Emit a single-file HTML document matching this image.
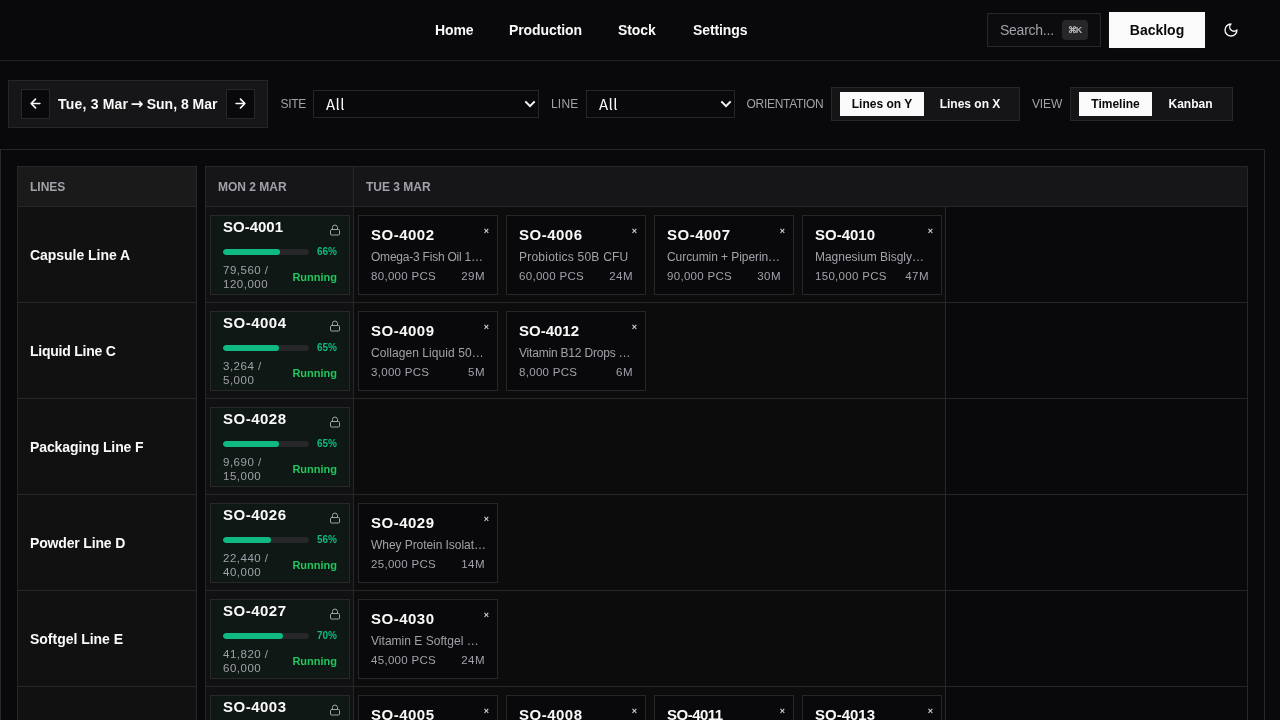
<!DOCTYPE html>
<html lang="en">
<head>
<meta charset="utf-8">
<title>Production Timeline</title>
<style>
*{box-sizing:border-box;margin:0;padding:0}
html,body{width:1280px;height:720px;overflow:hidden;background:#09090b;color:#fafafa;font-family:"Liberation Sans",sans-serif;}
body{position:relative;will-change:transform;-webkit-font-smoothing:antialiased}
.abs{position:absolute}
/* NAV */
.nav{position:absolute;left:0;top:0;width:1280px;height:61px;border-bottom:1px solid #232326}
.nav a{position:absolute;top:21px;font-size:14px;letter-spacing:-.1px;font-weight:700;color:#fafafa;text-decoration:none;line-height:18px;white-space:nowrap}
.search{position:absolute;left:987px;top:13px;width:114px;height:34px;border:1px solid #27272a;background:#0c0c0e;color:#a1a1aa;font-size:14px;line-height:32px;padding-left:12px;letter-spacing:-.25px}
.kbd{position:absolute;left:74px;top:6px;width:26px;height:20px;background:#27272a;border-radius:4px;color:#b4b4bb;font-size:9px;font-weight:700;line-height:20px;text-align:center;letter-spacing:-1.2px;text-indent:-1px}
.backlog{position:absolute;left:1109px;top:12px;width:96px;height:36px;background:#fafafa;color:#09090b;font-size:14px;font-weight:700;line-height:36px;text-align:center;box-shadow:0 0 8px rgba(255,255,255,.04)}
/* TOOLBAR */
.datebox{position:absolute;left:8px;top:80px;width:260px;height:48px;background:#161618;border:1px solid #27272a}
.arrowbtn{position:absolute;top:8px;width:29px;height:30px;background:#09090b;border:1px solid #27272a}
.datetxt{position:absolute;left:49px;top:14px;font-size:14px;font-weight:700;line-height:18px;white-space:nowrap}
.arr{font-family:"DejaVu Sans",sans-serif;font-size:15px;font-weight:700;display:inline-block;width:12px;margin:0 3.5px 0 3px;line-height:18px;vertical-align:top;position:relative;top:0;text-indent:-.5px}
.lbl{position:absolute;top:97px;font-size:12px;color:#a1a1aa;line-height:14px;letter-spacing:.2px;white-space:nowrap}
.sel{position:absolute;top:90px;height:28px;border:1px solid #27272a;background:#09090b;color:#fafafa;font-family:"Noto Sans CJK SC","Liberation Sans",sans-serif;font-size:15px;line-height:26px;padding-left:12px;letter-spacing:.4px}
.sel svg{position:absolute;right:2px;top:8px}
.seg{position:absolute;top:87px;height:34px;border:1px solid #27272a;background:#151517}
.seg span{position:absolute;top:4px;height:24px;font-size:12px;font-weight:700;line-height:24px;text-align:center;white-space:nowrap}
.seg .on{background:#fafafa;color:#09090b}
/* PANEL */
.panel{position:absolute;left:0;top:149px;width:1265px;height:600px;border:1px solid #27272a}
.lines{position:absolute;left:17px;top:166px;width:180px;height:560px;border:1px solid #27272a;background:#111111}
.grid{position:absolute;left:205px;top:166px;width:1043px;height:560px;border:1px solid #27272a;background:#09090b}
.hdr{position:absolute;left:0;top:0;right:0;height:40px;background:#161618;border-bottom:1px solid #27272a}
.hdr span{position:absolute;top:13px;font-size:12px;font-weight:700;color:#a1a1aa;line-height:14px;white-space:nowrap}
.lrow{position:absolute;left:0;width:178px;height:96px;border-bottom:1px solid #27272a}
.lrow span{position:absolute;left:12px;top:39px;font-size:14px;font-weight:700;line-height:18px;white-space:nowrap;letter-spacing:-.15px}
.grow{position:absolute;left:0;width:1041px;height:96px;border-bottom:1px solid #27272a}
.cellbg{position:absolute;left:0;top:40px;width:739px;height:520px;background:#0c0c0d}
.vline{position:absolute;top:0;width:1px;background:#27272a}
/* cards */
.rc{position:absolute;width:140px;height:80px;background:#0f1814;border:1px solid #26292a}
.rc .id{position:absolute;left:12px;top:2px;font-size:15px;font-weight:700;line-height:18px}
.rc .bar{position:absolute;left:12px;top:33px;width:86px;height:6px;border-radius:3px;background:#27272a;overflow:hidden}
.rc .bar i{display:block;height:6px;border-radius:3px;background:#10b981}
.rc .pct{position:absolute;right:12px;top:30px;font-size:10px;font-weight:700;color:#10b981;line-height:12px}
.rc .qty{position:absolute;left:12px;top:46.7px;font-size:11.5px;color:#a1a1aa;line-height:14px;width:80px;letter-spacing:.5px}
.rc .st{position:absolute;right:12px;top:54px;font-size:11px;font-weight:700;color:#22c55e;line-height:14px}
.rc svg{position:absolute;left:118px;top:8px}
.pc{position:absolute;width:140px;height:80px;background:#09090b;border:1px solid #27272a}
.pc .id{position:absolute;left:12px;top:10px;font-size:15px;font-weight:700;line-height:18px}
.pc .x{position:absolute;right:8px;top:9.5px;font-size:9px;font-weight:700;color:#d4d4d8;line-height:10px}
.pc .nm{position:absolute;left:12px;top:34px;font-size:12px;color:#a1a1aa;line-height:14px;white-space:nowrap}
.pc .q{position:absolute;left:12px;top:53.4px;font-size:11.5px;color:#a1a1aa;line-height:14px;letter-spacing:.3px;white-space:nowrap}
.pc .m{position:absolute;right:12px;top:53.4px;font-size:11.5px;color:#a1a1aa;line-height:14px;letter-spacing:.5px}
</style>
</head>
<body>
<div class="nav">
  <a style="left:435px">Home</a>
  <a style="left:509px">Production</a>
  <a style="left:618px">Stock</a>
  <a style="left:693px">Settings</a>
  <div class="search">Search...<span class="kbd">⌘K</span></div>
  <div class="backlog">Backlog</div>
  <svg class="abs" style="left:1223px;top:22px" width="16" height="16" viewBox="0 0 24 24" fill="none" stroke="#fafafa" stroke-width="2" stroke-linecap="round" stroke-linejoin="round"><path d="M12 3a6 6 0 0 0 9 9 9 9 0 1 1-9-9Z"/></svg>
</div>

<div class="datebox">
  <div class="arrowbtn" style="left:12px"><svg class="abs" style="left:6px;top:6px" width="15" height="15" viewBox="0 0 24 24" fill="none" stroke="#fafafa" stroke-width="2.6" stroke-linecap="round" stroke-linejoin="round"><path d="M19 12H5M12 5l-7 7 7 7"/></svg></div>
  <div class="datetxt"><span style="letter-spacing:.2px">Tue, 3 Mar</span><span class="arr">→</span><span>Sun, 8 Mar</span></div>
  <div class="arrowbtn" style="left:217px"><svg class="abs" style="left:6px;top:6px" width="15" height="15" viewBox="0 0 24 24" fill="none" stroke="#fafafa" stroke-width="2.6" stroke-linecap="round" stroke-linejoin="round"><path d="M5 12h14M12 5l7 7-7 7"/></svg></div>
</div>
<div class="lbl" style="left:280.5px;letter-spacing:-.3px">SITE</div>
<div class="sel" style="left:313px;width:226px">All<svg width="12" height="10" viewBox="0 0 12 10" fill="none" stroke="#fafafa" stroke-width="2"><path d="M1.3 2.4 6 7.1l4.7-4.7"/></svg></div>
<div class="lbl" style="left:551px">LINE</div>
<div class="sel" style="left:586px;width:149px">All<svg width="12" height="10" viewBox="0 0 12 10" fill="none" stroke="#fafafa" stroke-width="2"><path d="M1.3 2.4 6 7.1l4.7-4.7"/></svg></div>
<div class="lbl" style="left:746.5px;letter-spacing:-.3px">ORIENTATION</div>
<div class="seg" style="left:831px;width:189px"><span class="on" style="left:8px;width:84px">Lines on Y</span><span style="left:96px;width:84px">Lines on X</span></div>
<div class="lbl" style="left:1032px;letter-spacing:-.15px">VIEW</div>
<div class="seg" style="left:1070px;width:163px"><span class="on" style="left:8px;width:73px">Timeline</span><span style="left:85px;width:69px">Kanban</span></div>

<div class="panel"></div>
<div class="lines">
  <div class="hdr" style="background:#1a1a1a"><span style="left:12px">LINES</span></div>
  <div class="lrow" style="top:40px"><span style="letter-spacing:-0.04px">Capsule Line A</span></div>
  <div class="lrow" style="top:136px"><span style="letter-spacing:-0.24px">Liquid Line C</span></div>
  <div class="lrow" style="top:232px"><span style="letter-spacing:-0.1px">Packaging Line F</span></div>
  <div class="lrow" style="top:328px"><span style="letter-spacing:-0.16px">Powder Line D</span></div>
  <div class="lrow" style="top:424px"><span style="letter-spacing:-0.02px">Softgel Line E</span></div>
  <div class="lrow" style="top:520px"><span>Tablet Line B</span></div>
</div>
<div class="grid">
  <div class="cellbg"></div><div class="cellbg" style="width:147px;background:#111113"></div>
  <div class="hdr"><span style="left:12px">MON 2 MAR</span><span style="left:160px">TUE 3 MAR</span><div class="vline" style="left:147px;height:40px"></div></div>
  <div class="grow" style="top:40px"></div>
  <div class="grow" style="top:136px"></div>
  <div class="grow" style="top:232px"></div>
  <div class="grow" style="top:328px"></div>
  <div class="grow" style="top:424px"></div>
  <div class="grow" style="top:520px"></div>
  <div class="vline" style="left:147px;top:40px;height:520px"></div>
  <div class="vline" style="left:739px;top:40px;height:520px"></div>
</div>
<div id="cards">
<div class="rc" style="left:210px;top:215px"><div class="id" style="letter-spacing:0px">SO-4001</div><svg width="12" height="12" viewBox="0 0 24 24" fill="none" stroke="#a1a1aa" stroke-width="2" stroke-linecap="round" stroke-linejoin="round"><rect x="3" y="11" width="18" height="11" rx="2"/><path d="M7 11V7a5 5 0 0 1 10 0v4"/></svg><div class="bar"><i style="width:66%"></i></div><div class="pct">66%</div><div class="qty">79,560 /<br>120,000</div><div class="st">Running</div></div>
<div class="pc" style="left:358px;top:215px"><div class="id" style="letter-spacing:0.5px">SO-4002</div><div class="x">×</div><div class="nm" style="letter-spacing:-0.22px">Omega-3 Fish Oil 1…</div><div class="q">80,000 PCS</div><div class="m">29M</div></div>
<div class="pc" style="left:506px;top:215px"><div class="id" style="letter-spacing:0.5px">SO-4006</div><div class="x">×</div><div class="nm" style="letter-spacing:0.23px">Probiotics 50B CFU</div><div class="q">60,000 PCS</div><div class="m">24M</div></div>
<div class="pc" style="left:654px;top:215px"><div class="id" style="letter-spacing:0.5px">SO-4007</div><div class="x">×</div><div class="nm" style="letter-spacing:-0.07px">Curcumin + Piperin…</div><div class="q">90,000 PCS</div><div class="m">30M</div></div>
<div class="pc" style="left:802px;top:215px"><div class="id" style="letter-spacing:0px">SO-4010</div><div class="x">×</div><div class="nm" style="letter-spacing:-0.03px">Magnesium Bisgly…</div><div class="q">150,000 PCS</div><div class="m">47M</div></div>
<div class="rc" style="left:210px;top:311px"><div class="id" style="letter-spacing:0.5px">SO-4004</div><svg width="12" height="12" viewBox="0 0 24 24" fill="none" stroke="#a1a1aa" stroke-width="2" stroke-linecap="round" stroke-linejoin="round"><rect x="3" y="11" width="18" height="11" rx="2"/><path d="M7 11V7a5 5 0 0 1 10 0v4"/></svg><div class="bar"><i style="width:65%"></i></div><div class="pct">65%</div><div class="qty">3,264 /<br>5,000</div><div class="st">Running</div></div>
<div class="pc" style="left:358px;top:311px"><div class="id" style="letter-spacing:0.5px">SO-4009</div><div class="x">×</div><div class="nm" style="letter-spacing:0.07px">Collagen Liquid 50…</div><div class="q">3,000 PCS</div><div class="m">5M</div></div>
<div class="pc" style="left:506px;top:311px"><div class="id" style="letter-spacing:0px">SO-4012</div><div class="x">×</div><div class="nm" style="letter-spacing:-0.2px">Vitamin B12 Drops …</div><div class="q">8,000 PCS</div><div class="m">6M</div></div>
<div class="rc" style="left:210px;top:407px"><div class="id" style="letter-spacing:0.5px">SO-4028</div><svg width="12" height="12" viewBox="0 0 24 24" fill="none" stroke="#a1a1aa" stroke-width="2" stroke-linecap="round" stroke-linejoin="round"><rect x="3" y="11" width="18" height="11" rx="2"/><path d="M7 11V7a5 5 0 0 1 10 0v4"/></svg><div class="bar"><i style="width:65%"></i></div><div class="pct">65%</div><div class="qty">9,690 /<br>15,000</div><div class="st">Running</div></div>
<div class="rc" style="left:210px;top:503px"><div class="id" style="letter-spacing:0.5px">SO-4026</div><svg width="12" height="12" viewBox="0 0 24 24" fill="none" stroke="#a1a1aa" stroke-width="2" stroke-linecap="round" stroke-linejoin="round"><rect x="3" y="11" width="18" height="11" rx="2"/><path d="M7 11V7a5 5 0 0 1 10 0v4"/></svg><div class="bar"><i style="width:56%"></i></div><div class="pct">56%</div><div class="qty">22,440 /<br>40,000</div><div class="st">Running</div></div>
<div class="pc" style="left:358px;top:503px"><div class="id" style="letter-spacing:0.5px">SO-4029</div><div class="x">×</div><div class="nm" style="letter-spacing:-0.06px">Whey Protein Isolat…</div><div class="q">25,000 PCS</div><div class="m">14M</div></div>
<div class="rc" style="left:210px;top:599px"><div class="id" style="letter-spacing:0.5px">SO-4027</div><svg width="12" height="12" viewBox="0 0 24 24" fill="none" stroke="#a1a1aa" stroke-width="2" stroke-linecap="round" stroke-linejoin="round"><rect x="3" y="11" width="18" height="11" rx="2"/><path d="M7 11V7a5 5 0 0 1 10 0v4"/></svg><div class="bar"><i style="width:70%"></i></div><div class="pct">70%</div><div class="qty">41,820 /<br>60,000</div><div class="st">Running</div></div>
<div class="pc" style="left:358px;top:599px"><div class="id" style="letter-spacing:0.5px">SO-4030</div><div class="x">×</div><div class="nm" style="letter-spacing:0.03px">Vitamin E Softgel …</div><div class="q">45,000 PCS</div><div class="m">24M</div></div>
<div class="rc" style="left:210px;top:695px"><div class="id" style="letter-spacing:0.5px">SO-4003</div><svg width="12" height="12" viewBox="0 0 24 24" fill="none" stroke="#a1a1aa" stroke-width="2" stroke-linecap="round" stroke-linejoin="round"><rect x="3" y="11" width="18" height="11" rx="2"/><path d="M7 11V7a5 5 0 0 1 10 0v4"/></svg><div class="bar"><i style="width:60%"></i></div><div class="pct">60%</div><div class="qty">30,000 /<br>50,000</div><div class="st">Running</div></div>
<div class="pc" style="left:358px;top:695px"><div class="id" style="letter-spacing:0.5px">SO-4005</div><div class="x">×</div><div class="nm" style="letter-spacing:0px">Vitamin C 1000mg</div><div class="q">100,000 PCS</div><div class="m">33M</div></div>
<div class="pc" style="left:506px;top:695px"><div class="id" style="letter-spacing:0.5px">SO-4008</div><div class="x">×</div><div class="nm" style="letter-spacing:0px">Zinc Picolinate</div><div class="q">70,000 PCS</div><div class="m">23M</div></div>
<div class="pc" style="left:654px;top:695px"><div class="id" style="letter-spacing:-0.5px">SO-4011</div><div class="x">×</div><div class="nm" style="letter-spacing:0px">Multivitamin Daily</div><div class="q">120,000 PCS</div><div class="m">40M</div></div>
<div class="pc" style="left:802px;top:695px"><div class="id" style="letter-spacing:0px">SO-4013</div><div class="x">×</div><div class="nm" style="letter-spacing:0px">Iron Bisglycinate</div><div class="q">50,000 PCS</div><div class="m">17M</div></div>
</div>
</body>
</html>
